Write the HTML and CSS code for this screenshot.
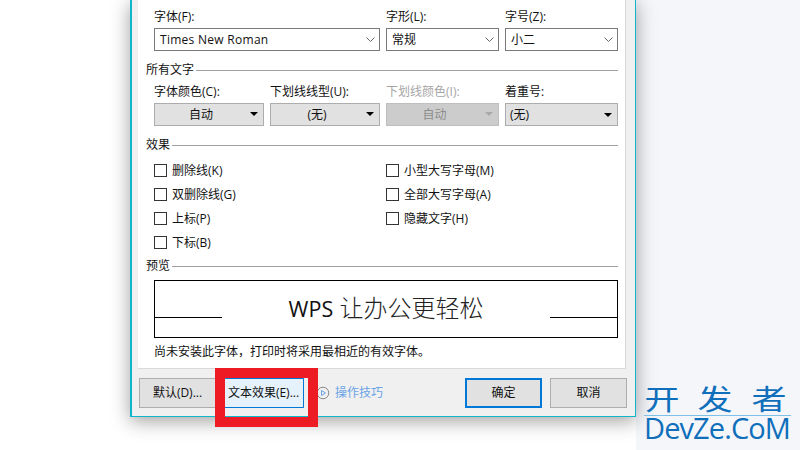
FILE: index.html
```html
<!DOCTYPE html>
<html lang="zh-CN">
<head>
<meta charset="utf-8">
<title>字体</title>
<link rel="stylesheet" href="styles.css">
</head>
<body>
<div class="desktop">
  <div class="stage">
    <div class="dialog">
      <div class="panel">
        <div class="row row-font">
          <div class="field f-226"><span class="label">字体(F):</span><div class="combo"><span class="latin">Times New Roman</span><svg class="chev" viewBox="0 0 9 5"><path d="M.5.500 4.500 4.500 8.500.5"/></svg></div></div>
          <div class="field f-113"><span class="label">字形(L):</span><div class="combo"><span>常规</span><svg class="chev" viewBox="0 0 9 5"><path d="M.5.500 4.500 4.500 8.500.5"/></svg></div></div>
          <div class="field f-113"><span class="label">字号(Z):</span><div class="combo"><span>小二</span><svg class="chev" viewBox="0 0 9 5"><path d="M.5.500 4.500 4.500 8.500.5"/></svg></div></div>
        </div>
        <div class="legend legend-all"><span>所有文字</span></div>
        <div class="row row-text">
          <div class="field f-110"><span class="label">字体颜色(C):</span><div class="drop center"><span>自动</span><i class="arrow"></i></div></div>
          <div class="field f-110"><span class="label">下划线线型(U):</span><div class="drop center"><span>(无)</span><i class="arrow"></i></div></div>
          <div class="field f-113"><span class="label disabled">下划线颜色(I):</span><div class="drop center off"><span>自动</span><i class="arrow"></i></div></div>
          <div class="field f-113"><span class="label">着重号:</span><div class="drop"><span>(无)</span><i class="arrow"></i></div></div>
        </div>
        <div class="legend legend-fx"><span>效果</span></div>
        <div class="checks">
          <label class="check"><i class="box"></i>删除线(K)</label>
          <label class="check"><i class="box"></i>小型大写字母(M)</label>
          <label class="check"><i class="box"></i>双删除线(G)</label>
          <label class="check"><i class="box"></i>全部大写字母(A)</label>
          <label class="check"><i class="box"></i>上标(P)</label>
          <label class="check"><i class="box"></i>隐藏文字(H)</label>
          <label class="check"><i class="box"></i>下标(B)</label>
        </div>
        <div class="legend legend-pv"><span>预览</span></div>
        <div class="preview">
          <i class="rule"></i>
          <span class="sample"><span class="sample-latin">WPS</span> 让办公更轻松</span>
          <i class="rule"></i>
        </div>
        <p class="note">尚未安装此字体，打印时将采用最相近的有效字体。</p>
      </div>
      <div class="footer">
        <button class="btn btn-default">默认(D)...</button>
        <button class="btn btn-effect">文本效果(E)...</button>
        <span class="tips">
          <svg class="tips-icon" viewBox="0 0 14 14"><circle cx="7" cy="7" r="5.800"/><path class="play" d="M5.500 4.500v5l4-2.500z"/></svg>
          操作技巧
        </span>
        <button class="btn btn-ok">确定</button>
        <button class="btn btn-cancel">取消</button>
      </div>
    </div>
  </div>
  <div class="side"></div>
</div>
<div class="highlight"></div>
<div class="mark">
  <div class="mark-cn"><span>开</span><span>发</span><span>者</span></div>
  <div class="mark-en">DevZe.CoM</div>
</div>
</body>
</html>
```
FILE: styles.css
```css
* { box-sizing: border-box; }
html, body { margin: 0; height: 100%; overflow: hidden; background: #fff; }
body {
  width: 800px; height: 450px; position: relative;
  font: 12px/16px "Open Sans", "Noto Sans CJK SC", sans-serif;
  color: #111;
}
.desktop { display: flex; width: 800px; height: 450px; }
.stage { width: 636px; padding-left: 130px; background: #fff; }
.side { flex: 1; background: #f5f6fa; }
.dialog {
  width: 506px; height: 417px;
  background: #f0f0f0;
  border: solid #12b6cb; border-width: 0 1px 1px 2px;
  box-shadow: 0 4px 18px rgba(0,0,0,.38);
  padding-left: 6px;
  display: flex; flex-direction: column;
  position: relative; z-index: 1;
}
.panel {
  width: 488px; height: 369px;
  background: #fff;
  border: solid #d9d9d9; border-width: 0 1px 1px 0;
  padding: 9px 7px 0 8px;
}
.row { display: flex; gap: 6px; padding-left: 8px; }
.field { display: flex; flex-direction: column; }
.f-226 { width: 226px; } .f-113 { width: 113px; } .f-110 { width: 110px; }
.label { height: 19px; white-space: nowrap; }
.disabled { color: #a6a6a6; }
.combo, .drop {
  height: 23px; display: flex; align-items: center; justify-content: space-between;
  padding: 0 4px 0 5px; white-space: nowrap;
}
.combo { background: #fff; border: 1px solid #7a7a7a; }
.latin { letter-spacing: .28px; }
.drop { background: #e1e1e1; border: 1px solid #adadad; padding: 0 4px; position: relative; }
.center { justify-content: center; padding-right: 20px; }
.off { background: #cccccc; border-color: #bfbfbf; color: #8c8c8c; }
.chev { width: 9px; height: 5px; fill: none; stroke: #666; }
.arrow {
  width: 0; height: 0; border: solid transparent; border-width: 4px 4px 0; border-top-color: #000;
  margin-right: 1px;
}
.center .arrow { position: absolute; right: 5px; top: 8px; margin: 0; }
.off .arrow { border-top-color: #a8a8a8; }
.legend { display: flex; align-items: center; gap: 2px; white-space: nowrap; height: 16px; }
.legend::after { content: ""; flex: 1; height: 1px; background: #a0a0a0; }
.legend-all { margin-top: 11px; }
.row-text { margin-top: 6px; }
.legend-fx { margin-top: 11px; }
.checks {
  display: grid; grid-template-columns: 232px 1fr; grid-auto-rows: 24px;
  margin-top: 8px; padding-left: 8px;
}
.check { display: flex; align-items: center; gap: 5px; height: 24px; padding-bottom: 5px; }
.box { width: 13px; height: 13px; border: 1px solid #333; background: #fff; }
.legend-pv { margin-top: 1px; }
.preview {
  margin: 6px 0 0 8px; width: 464px; height: 58px;
  border: 1px solid #000;
  display: flex; justify-content: space-between; align-items: center;
}
.rule { width: 67px; height: 1px; background: #000; margin-top: 17px; }
.sample { font-size: 24px; line-height: 30px; font-weight: 300; margin-top: -1px; color: #222; white-space: nowrap; }
.sample-latin { font-size: 21.500px; font-weight: 400; color: #111; }
.note { margin: 6px 0 0 8px; }
.footer { flex: 1; display: flex; align-items: center; padding: 0 8px 0 1px; }
.btn {
  height: 30px; padding: 0; font: inherit; color: #111;
  background: #e1e1e1; border: 1px solid #adadad;
}
.btn-default { width: 77px; }
.btn-effect { width: 81px; margin-left: 7px; background: #e5f1fb; border-color: #0078d7; }
.tips { display: flex; align-items: center; gap: 5px; margin-left: 12px; color: #6aa3e6; }
.tips-icon { width: 14px; height: 14px; fill: none; }
.tips-icon circle { stroke: #8a8a8a; }
.tips-icon .play { stroke: #6aa3e6; }
.btn-ok { width: 77px; margin-left: auto; border: 2px solid #0078d7; }
.btn-cancel { width: 77px; margin-left: 8px; }
.highlight {
  position: absolute; left: 215px; top: 368px; width: 103px; height: 59px;
  border: 10px solid #ed1c24; z-index: 2;
}
.mark {
  position: absolute; left: 644px; top: 382px; width: 147px; z-index: 2; color: #0f6fbb;
}
.mark-cn {
  display: flex; justify-content: space-between;
  padding: 0 8px 0 4px;
  font: 400 28px/33px "Noto Sans CJK SC", sans-serif;
  height: 34px; border-bottom: 1px solid #7fc0e8;
}
.mark-cn span { display: inline-block; transform: scaleX(1.25); }
.mark-en { font: 29px/24px "Open Sans", sans-serif; letter-spacing: -.9px; white-space: nowrap; }
```
